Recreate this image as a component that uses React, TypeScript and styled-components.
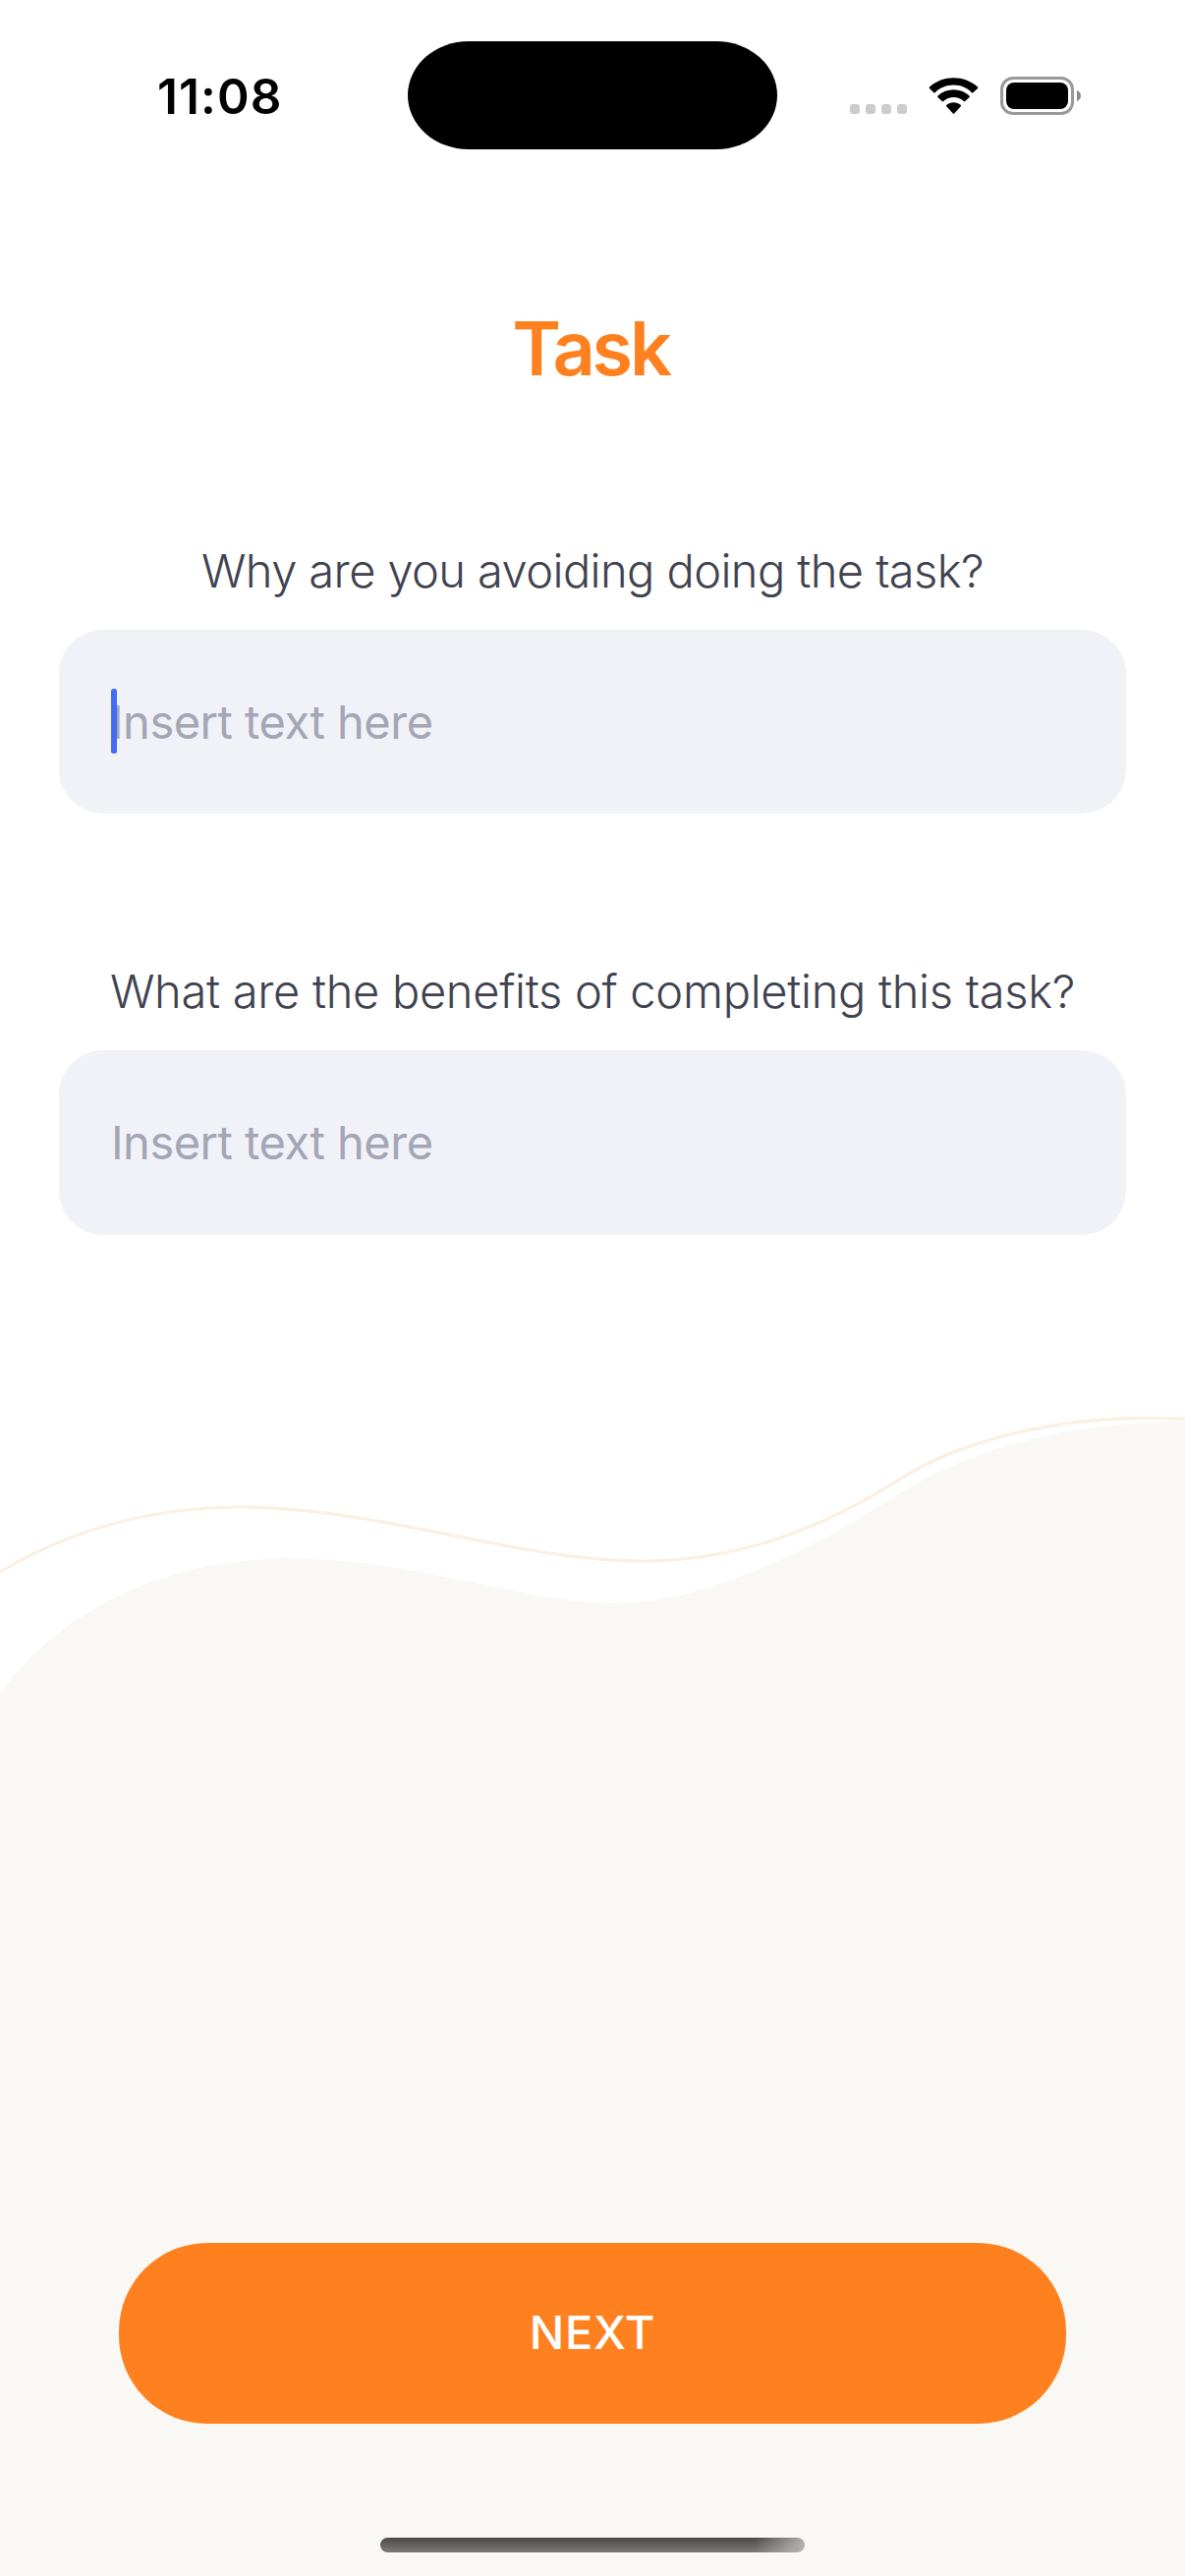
import React from "react";
import styled, { createGlobalStyle } from "styled-components";

const colors = {
  orange: "#ff801f",
  ink: "#40424f",
  placeholder: "#a2a6b5",
  field: "#f1f2f7",
  caret: "#446cf2",
  sand: "#f9f8f4",
  line: "#faf0e3",
};

const GlobalStyle = createGlobalStyle`
  *, *::before, *::after { box-sizing: border-box; }
  body {
    margin: 0;
    background: #fff;
    font-family: Inter, "Liberation Sans", sans-serif;
  }
`;

const Screen = styled.div`
  position: relative;
  isolation: isolate;
  display: flex;
  flex-direction: column;
  width: 1206px;
  height: 2622px;
  overflow: hidden;
  background: #fff;
`;

const Waves = styled.svg`
  position: absolute;
  z-index: -1;
  left: 0;
  bottom: 0;
  width: 1206px;
  height: 1222px;
`;

const StatusBar = styled.header`
  display: grid;
  grid-template-columns: 415px 376px 415px;
  align-items: center;
  height: 194px;
`;

const Clock = styled.time`
  padding: 2px 0 0 160px;
  font-size: 49.5px;
  line-height: 60px;
  font-weight: 600;
  letter-spacing: 1.1px;
  color: #000;
`;

const Island = styled.div`
  height: 110px;
  border-radius: 62px / 55px;
  background: #000;
`;

const StatusIcons = styled.div`
  display: flex;
  align-items: center;
  padding: 1px 0 0 74px;
`;

const SignalDots = styled.div`
  display: flex;
  gap: 6px;
  margin: 27px 22px 0 0;
`;

const SignalDot = styled.i`
  width: 10px;
  height: 10px;
  border-radius: 3px;
  background: #ccc;
`;

const WifiIcon = styled.svg`
  width: 51px;
  height: 38px;
  margin-right: 22px;
`;

const BatteryIcon = styled.svg`
  width: 83px;
  height: 39px;
`;

const Main = styled.main`
  display: flex;
  flex-direction: column;
  flex: 1;
  padding: 0 60px;
`;

const Title = styled.h1`
  margin: 114px 0 151px;
  padding-right: 4px;
  font-size: 75.6px;
  line-height: 94px;
  font-weight: 600;
  letter-spacing: -3.2px;
  text-align: center;
  color: ${colors.orange};
`;

const Question = styled.section<{ $height: number }>`
  display: flex;
  flex-direction: column;
  gap: 32px;
  height: ${(p) => p.$height}px;
`;

const Prompt = styled.label<{ $tracking: number }>`
  height: 56px;
  font-size: 47px;
  line-height: 56px;
  font-weight: 300;
  letter-spacing: ${(p) => p.$tracking}px;
  text-align: center;
  white-space: nowrap;
  color: ${colors.ink};
`;

const Field = styled.div<{ $height: number }>`
  position: relative;
  display: flex;
  align-items: center;
  height: ${(p) => p.$height}px;
  padding: 0 53px;
  border-radius: 45px;
  background: ${colors.field};
`;

const Placeholder = styled.span`
  font-size: 47px;
  line-height: 56px;
  font-weight: 400;
  letter-spacing: -0.5px;
  color: ${colors.placeholder};
`;

const Caret = styled.i`
  position: absolute;
  left: 53px;
  top: 60px;
  width: 6px;
  height: 66px;
  border-radius: 2.5px;
  background: ${colors.caret};
`;

const Footer = styled.footer`
  display: flex;
  flex-direction: column;
  align-items: center;
  padding-bottom: 24px;
`;

const NextButton = styled.button`
  width: 964px;
  height: 184px;
  margin-bottom: 116px;
  padding: 0 0 3px;
  border: 0;
  border-radius: 90px;
  background: ${colors.orange};
  color: #fff;
  font: 500 47px/56px Inter, "Liberation Sans", sans-serif;
  letter-spacing: 0.7px;
`;

const HomeIndicator = styled.div`
  width: 432px;
  height: 15px;
  border-radius: 8px;
  background:
    linear-gradient(100deg, transparent 88%, rgba(190, 190, 186, 0.9) 100%),
    linear-gradient(#4a4a47, #7b7a76);
`;

const questions = [
  { prompt: "Why are you avoiding doing the task?", tracking: -0.58, block: 428, field: 187, focused: true },
  { prompt: "What are the benefits of completing this task?", tracking: -0.29, block: 276, field: 188, focused: false },
];

export default function App() {
  return (
    <>
      <GlobalStyle />
      <Screen>
        <Waves viewBox="0 1400 1206 1222" fill="none" aria-hidden="true">
          <path
            d="M0 1724C70 1628 185 1586.3 296 1586.3C420 1586.3 530 1631.7 626 1631.7C710 1631.7 805 1590 915 1520.5C995 1470 1100 1446.7 1206 1446.7V2622H0Z"
            fill={colors.sand}
          />
          <path
            d="M-4 1602.4L0 1600C77 1554 160 1534 246 1534C385 1534 525 1589 655 1589C745 1589 835 1558 920 1503C985 1463 1080 1443.3 1168 1443.3C1181 1443.3 1195 1443.6 1210 1444.5"
            stroke={colors.line}
            strokeWidth="3.2"
          />
        </Waves>

        <StatusBar>
          <Clock>11:08</Clock>
          <Island />
          <StatusIcons>
            <SignalDots>
              <SignalDot />
              <SignalDot />
              <SignalDot />
              <SignalDot />
            </SignalDots>
            <WifiIcon viewBox="0 0 51 38" fill="#000">
              <path d="M25.5 7.6c7 0 13.500 2.700 18.400 7.600.4.4 1 .4 1.400 0l4.700-4.300c.4-.4.400-1 0-1.400C36.500-2.900 14.500-2.900 1 9.500c-.4.4-.4 1 0 1.400l4.300 4.300c.4.400 1 .400 1.400 0 5.100-4.900 11.800-7.600 18.800-7.600z" />
              <path d="M25.500 20c3.800 0 7.500 1.500 10.300 4.100.4.4 1 .4 1.400 0l4.400-4.100c.4-.4.400-1 0-1.400-9.100-8.400-23.100-8.400-32.200 0-.4.4-.4 1 0 1.400l4.400 4.100c.4.400 1 .400 1.400 0 2.800-2.600 6.500-4.100 10.300-4.100z" />
              <path d="M32.800 29.300c.4-.4.400-1 0-1.400-4.200-3.500-10.400-3.500-14.600 0-.4.4-.4 1 0 1.400l6.600 7.300c.4.400 1 .400 1.400 0z" />
            </WifiIcon>
            <BatteryIcon viewBox="0 0 83 39">
              <rect x="1.500" y="1.500" width="72" height="36" rx="11.500" fill="none" stroke="#999" strokeWidth="3" />
              <rect x="6" y="6" width="63" height="27" rx="8" fill="#000" />
              <path d="M78 14c2.600 1 4 3.200 4 5.500s-1.400 4.500-4 5.500z" fill="#8a8a8a" />
            </BatteryIcon>
          </StatusIcons>
        </StatusBar>

        <Main>
          <Title>Task</Title>
          {questions.map((q) => (
            <Question key={q.prompt} $height={q.block}>
              <Prompt $tracking={q.tracking}>{q.prompt}</Prompt>
              <Field $height={q.field}>
                <Placeholder>Insert text here</Placeholder>
                {q.focused && <Caret />}
              </Field>
            </Question>
          ))}
        </Main>

        <Footer>
          <NextButton>NEXT</NextButton>
          <HomeIndicator />
        </Footer>
      </Screen>
    </>
  );
}
